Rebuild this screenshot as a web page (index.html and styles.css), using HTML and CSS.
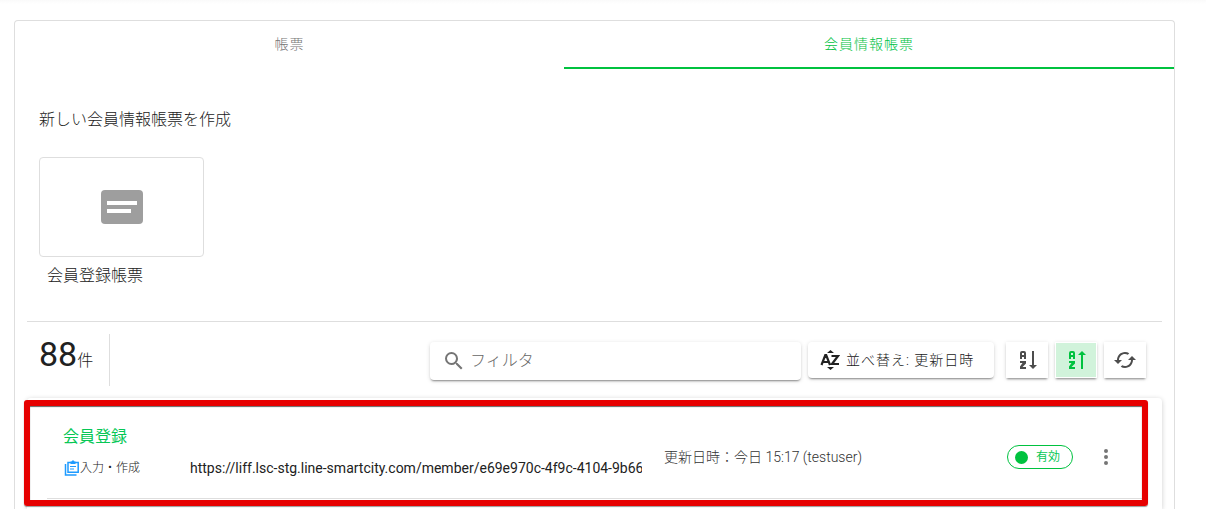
FILE: index.html
```html
<!DOCTYPE html>
<html lang="ja">
<head>
<meta charset="utf-8">
<title>会員情報帳票</title>
<link rel="stylesheet" href="styles.css">
</head>
<body>
<main class="panel">
  <div class="tabs" role="tablist">
    <button class="tab tab-forms" type="button" role="tab" aria-selected="false">帳票</button>
    <button class="tab tab-members" type="button" role="tab" aria-selected="true">会員情報帳票</button>
  </div>

  <section class="create">
    <h1 class="create-title">新しい会員情報帳票を作成</h1>
    <button class="template" type="button">
      <span class="template-card">
        <svg width="42" height="34" viewBox="0 0 42 34" aria-hidden="true"><rect width="42" height="34" rx="4" fill="#9e9e9e"/><path d="M6 11h30v4H6zM6 19h24v4H6z" fill="#fff"/></svg>
      </span>
      <span class="template-name">会員登録帳票</span>
    </button>
  </section>

  <section class="results">
    <div class="toolbar">
      <p class="count"><span class="count-number">88</span>件</p>
      <label class="filter">
        <svg width="24" height="24" viewBox="0 0 24 24" aria-hidden="true"><path fill="#757575" d="M9.500 3A6.500 6.500 0 0 1 16 9.500c0 1.610-.590 3.090-1.560 4.230l.270.270h.790l5 5-1.500 1.500-5-5v-.790l-.270-.270A6.516 6.516 0 0 1 9.500 16a6.500 6.500 0 0 1 0-13m0 2C7 5 5 7 5 9.500S7 14 9.500 14 14 12 14 9.500 12 5 9.500 5z"/></svg>
        <input class="filter-input" type="text" placeholder="フィルタ" aria-label="フィルタ">
      </label>
      <button class="sort" type="button">
        <svg width="20" height="20" viewBox="0 0 20 20" aria-hidden="true"><g fill="none" stroke="#222" stroke-width="2.200"><path d="M1.500 15 5.300 5h.9L10 15M3 12h5.500M11.500 6H18L12 14h7"/></g><path fill="#222" d="M7 3l3.500-3L14 3zM7 17h7L10.500 20z"/></svg>
        <span>並べ替え: 更新日時</span>
      </button>
      <div class="icon-buttons">
        <button class="icon-button" type="button" aria-label="降順">
          <svg width="24" height="24" viewBox="0 0 24 24" aria-hidden="true"><path fill="currentColor" d="M19 17h3l-4 4-4-4h3V3h2v14M9 13H5v2h2.500L5 18.500V21h6v-2H7.500L11 15.500V13zM9 3H7a2 2 0 0 0-2 2v6h2V9h2v2h2V5a2 2 0 0 0-2-2m0 4H7V5h2z"/></svg>
        </button>
        <button class="icon-button icon-button-active" type="button" aria-label="昇順" aria-pressed="true">
          <svg width="24" height="24" viewBox="0 0 24 24" aria-hidden="true"><path fill="currentColor" d="M19 7h3l-4-4-4 4h3v14h2V7M9 13H5v2h2.500L5 18.500V21h6v-2H7.500L11 15.500V13zM9 3H7a2 2 0 0 0-2 2v6h2V9h2v2h2V5a2 2 0 0 0-2-2m0 4H7V5h2z"/></svg>
        </button>
        <button class="icon-button" type="button" aria-label="更新">
          <svg width="24" height="24" viewBox="0 0 24 24" aria-hidden="true"><path fill="currentColor" d="M19 8l-4 4h3c0 3.310-2.690 6-6 6-1 0-1.970-.250-2.800-.700l-1.460 1.460A7.930 7.930 0 0 0 12 20c4.420 0 8-3.580 8-8h3M6 12c0-3.310 2.690-6 6-6 1 0 1.970.250 2.800.700l1.460-1.460A7.930 7.930 0 0 0 12 4c-4.420 0-8 3.580-8 8H1l4 4 4-4"/></svg>
        </button>
      </div>
    </div>

    <div class="list">
      <article class="row">
        <div class="row-main">
          <a class="row-title" href="#">会員登録</a>
          <a class="row-action" href="#">
            <svg width="16" height="16" viewBox="0 0 16 16" aria-hidden="true"><g fill="none" stroke="#1e9bff" stroke-width="1.500"><path d="M4 2.500h10.200v9.700H4zM1.500 4v11h11"/><path d="M6 6.500h6M6 9h4" stroke-width="1.200"/></g><path fill="#1e9bff" d="M6.500 1.500h1L9 0l1.500 1.500h1V4h-5z"/></svg>入力・作成
          </a>
        </div>
        <div class="row-url">https://liff.lsc-stg.line-smartcity.com/member/e69e970c-4f9c-4104-9b66</div>
        <div class="row-date">更新日時：今日 15:17 (testuser)</div>
        <div class="row-status"><span class="chip"><span class="chip-dot"></span>有効</span></div>
        <button class="menu" type="button" aria-label="メニュー">
          <svg width="24" height="24" viewBox="0 0 24 24" aria-hidden="true"><path fill="#757575" d="M12 16a2 2 0 1 1 0 4 2 2 0 0 1 0-4m0-6a2 2 0 1 1 0 4 2 2 0 0 1 0-4m0-6a2 2 0 1 1 0 4 2 2 0 0 1 0-4"/></svg>
        </button>
      </article>
      <div class="highlight" aria-hidden="true"></div>
    </div>
  </section>
</main>
</body>
</html>
```
FILE: styles.css
```css
* { box-sizing: border-box; }

body {
  display: flex;
  flex-direction: column;
  height: 100vh;
  margin: 0;
  padding: 20px 31px 0 14px;
  overflow: hidden;
  background: linear-gradient(#fafafa, #fff 4px);
  color: #212121;
  font-family: Roboto, "Noto Sans CJK JP", sans-serif;
  font-size: 16px;
  line-height: 24px;
}

button {
  padding: 0;
  border: 0;
  background: #fff;
  color: inherit;
  font: inherit;
  cursor: pointer;
}

svg { display: block; flex: none; }
a { color: inherit; text-decoration: none; }

.panel {
  display: flex;
  flex: 1 0 auto;
  flex-direction: column;
  border: 1px solid #dedede;
  border-bottom: 0;
  border-radius: 4px 4px 0 0;
  background: #fff;
}

.tabs { display: grid; grid-template-columns: 549fr 610fr; height: 48px; }

.tab {
  border-bottom: 2px solid transparent;
  background: none;
  color: #757575;
  font-size: 14px;
  font-weight: 300;
  letter-spacing: 1px;
}

.tab-members { border-color: #00c23f; color: #00c23f; }

.create { padding: 39px 24px 33px; }
.create-title { margin: 0 0 25px; font-size: 16px; font-weight: 300; }

.template {
  display: flex;
  flex-direction: column;
  gap: 7px;
  width: 165px;
  font-weight: 300;
  text-align: left;
}

.template-card {
  display: flex;
  align-items: center;
  justify-content: center;
  width: 100%;
  height: 100px;
  border: 1px solid #dedede;
  border-radius: 4px;
}

.template-name { padding-left: 8px; }

.results {
  display: flex;
  flex: 1;
  flex-direction: column;
  margin: 0 12px;
  border-top: 1px solid #dedede;
}

.toolbar { display: flex; align-items: flex-start; height: 76px; padding: 12px 16px 0 12px; }

.count {
  height: 52px;
  margin: 0 auto 0 0;
  padding-right: 16px;
  border-right: 1px solid #dedede;
  font-weight: 300;
  line-height: 40px;
}

.count-number { font-size: 34px; font-weight: 400; }

.filter,
.sort,
.icon-button {
  display: flex;
  align-items: center;
  margin-top: 8px;
  box-shadow: 0 2px 2px -1px rgba(0, 0, 0, .4), 0 1px 4px rgba(0, 0, 0, .15);
}

.filter {
  gap: 4px;
  width: 371px;
  height: 38px;
  padding: 0 12px;
  border-radius: 4px;
}

.filter-input {
  flex: 1;
  min-width: 0;
  padding: 0;
  border: 0;
  outline: 0;
  background: none;
  font: inherit;
  font-weight: 300;
}

.filter-input::placeholder { color: #666; opacity: 1; }

.sort {
  gap: 6px;
  width: 186px;
  height: 36px;
  margin-left: 7px;
  padding-left: 12px;
  border-radius: 4px;
  font-size: 14px;
  font-weight: 300;
  letter-spacing: 1px;
}

.icon-buttons { display: flex; gap: 7px; margin-left: 12px; }

.icon-button {
  justify-content: center;
  width: 42px;
  height: 36px;
  color: #4d4d4d;
}

.icon-button-active { border: 1px solid #fff; background: #d1f3db; color: #00c23f; }

.list {
  position: relative;
  flex: 1;
  min-height: 111px;
  padding: 0 20px;
  border-radius: 4px 4px 0 0;
  box-shadow: 0 1px 5px rgba(0, 0, 0, .2);
}

.row {
  display: grid;
  grid-template-columns: 127px 452px 1fr 87px 24px;
  align-items: center;
  height: 101px;
  padding: 18px 24px 0 16px;
  border-bottom: 1px solid #dedede;
}

.row-main { display: flex; flex-direction: column; gap: 7px; padding-bottom: 10px; }
.row-title { color: #06c755; }
.row-action { display: flex; align-items: center; padding-left: 1px; font-size: 12px; font-weight: 300; }

.row-url {
  align-self: end;
  margin-bottom: 18px;
  overflow: hidden;
  font-size: 14px;
  white-space: nowrap;
}

.row-date { padding-left: 22px; color: #333; font-size: 14px; font-weight: 300; }

.chip {
  display: inline-flex;
  align-items: center;
  gap: 8px;
  height: 24px;
  padding: 0 12px 0 7px;
  border: 1px solid #00c23f;
  border-radius: 12px;
  color: #06c755;
  font-size: 12px;
}

.chip-dot { width: 13px; height: 13px; border-radius: 50%; background: #00c23f; }
.row-status { display: flex; }
.menu { width: 24px; height: 24px; }

/* Frame laid over the first entry */
.highlight {
  position: absolute;
  top: 2px;
  right: 14px;
  left: -3px;
  height: 106px;
  border: 6px solid #e60000;
  border-radius: 3px;
  box-shadow: 0 1px 1px rgba(0, 0, 0, .4), inset 0 1px 1px rgba(0, 0, 0, .6);
  pointer-events: none;
}
```
